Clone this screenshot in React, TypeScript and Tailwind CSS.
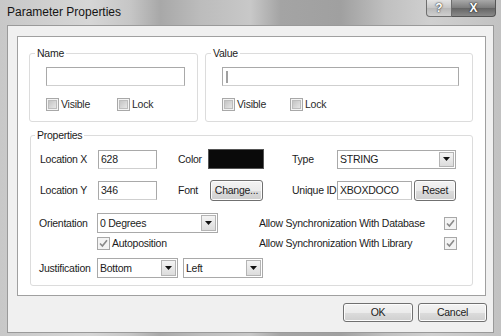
import React from "react";

const font = "font-['Liberation_Sans',Arial,sans-serif]";

function Checkbox({ checked = false }: { checked?: boolean }) {
  return (
    <div className="w-[13px] h-[13px] border border-[#a8a8a8] bg-[#f4f4f4] flex items-center justify-center shrink-0">
      {checked ? (
        <svg width="9" height="9" viewBox="0 0 9 9">
          <path d="M1 4.5 L3.4 7 L8 1.2" fill="none" stroke="#8a8a8a" strokeWidth="1.6" />
        </svg>
      ) : (
        <div className="w-[9px] h-[9px] border border-[#bdbdbd] bg-[linear-gradient(135deg,#c4c4c4,#e6e6e6)]" />
      )}
    </div>
  );
}

function TextBox({ w, value, children }: { w: string; value?: string; children?: React.ReactNode }) {
  return (
    <div className={`${w} h-[19px] border border-[#a9a9a9] border-b-[#cfcfcf] bg-white flex items-center pl-[2px] text-[#1c1c1c] shrink-0`}>
      {value}
      {children}
    </div>
  );
}

function Select({ w, h = "h-[19px]", value }: { w: string; h?: string; value: string }) {
  return (
    <div className={`${w} ${h} border border-[#a9a9a9] bg-white flex items-center shrink-0`}>
      <div className="flex-1 pl-[2px] text-[#1c1c1c]">{value}</div>
      <div className="w-[15px] self-stretch m-[1px] border border-[#b4b4b4] bg-[linear-gradient(#f4f4f4,#dcdcdc)] flex items-center justify-center">
        <svg width="7" height="4" viewBox="0 0 7 4">
          <path d="M0 0 H7 L3.5 4 Z" fill="#111" />
        </svg>
      </div>
    </div>
  );
}

function Button({ w, h, label }: { w: string; h: string; label: string }) {
  return (
    <div
      className={`${w} ${h} border border-[#707070] rounded-[3px] bg-[linear-gradient(#f3f3f3_0%,#ebebeb_50%,#dcdcdc_51%,#cfcfcf_100%)] shadow-[inset_0_0_0_1px_#fcfcfc] flex items-center justify-center text-[#1c1c1c] shrink-0`}
    >
      {label}
    </div>
  );
}

export default function App() {
  return (
    <div
      className={`${font} w-[501px] h-[336px] flex flex-col bg-[linear-gradient(90deg,#c8c8c8_0%,#d6d6d6_18%,#c6c6c6_26%,#a8a8a8_32%,#bcbcbc_40%,#c8c8c8_50%,#a4a4a4_56%,#a0a0a0_68%,#c0c0c0_77%,#d0d0d0_86%,#c2c2c2_100%)] overflow-hidden`}
    >
      {/* title bar */}
      <div className="h-[25px] flex items-start justify-between shrink-0">
        <div className="pl-[7px] pt-[5px] text-[12px] leading-[14px] text-[#141414]">Parameter Properties</div>
        <div className="flex mr-[5px]">
          <div className="w-[26px] h-[17px] border border-[#6e6e6e] border-t-0 rounded-bl-[4px] bg-[linear-gradient(#e4e4e4,#c6c6c6_50%,#b8b8b8_51%,#cfcfcf)] flex items-center justify-center text-[12px] font-bold text-white [text-shadow:0_0_2px_#333,0_0_1px_#333]">
            ?
          </div>
          <div className="w-[44px] h-[17px] border border-[#555] border-t-0 border-l-0 rounded-br-[4px] bg-[linear-gradient(#a8a8a8,#7c7c7c_50%,#646464_51%,#8a8a8a)] flex items-center justify-center text-[12px] font-bold text-white [text-shadow:0_0_2px_#222,0_0_1px_#222]">
            X
          </div>
        </div>
      </div>

      {/* client */}
      <div className="mx-[7px] h-[308px] border border-[#9a9a9a] bg-[#f0f0f0] flex flex-col text-[10.5px] leading-[13px] tracking-[-0.25px] text-[#1c1c1c]">
        {/* white panel */}
        <div className="ml-[9px] mt-[10px] w-[469px] h-[260px] border border-[#a0a0a0] bg-white flex flex-col">
          {/* top groups */}
          <div className="flex mt-[10px]">
            <fieldset className="ml-[11px] w-[169px] h-[75px] border border-[#dcdcdc] rounded-[3px] pl-[5px]">
              <legend className="px-[2px]">Name</legend>
              <div className="pl-[11px] pt-[7px]">
                <TextBox w="w-[139px]" />
                <div className="flex items-center mt-[12px]">
                  <Checkbox />
                  <span className="ml-[2px] w-[56px] text-[#2a2a2a]">Visible</span>
                  <Checkbox />
                  <span className="ml-[2px] text-[#2a2a2a]">Lock</span>
                </div>
              </div>
            </fieldset>
            <fieldset className="ml-[7px] w-[268px] h-[75px] border border-[#dcdcdc] rounded-[3px] pl-[5px]">
              <legend className="px-[2px]">Value</legend>
              <div className="pl-[11px] pt-[7px]">
                <TextBox w="w-[237px]">
                  <div className="ml-[1px] w-[2px] h-[12px] bg-[#a0a0a0]" />
                </TextBox>
                <div className="flex items-center mt-[12px]">
                  <Checkbox />
                  <span className="ml-[2px] w-[53px] text-[#2a2a2a]">Visible</span>
                  <Checkbox />
                  <span className="ml-[2px] text-[#2a2a2a]">Lock</span>
                </div>
              </div>
            </fieldset>
          </div>

          {/* properties */}
          <fieldset className="ml-[12px] mt-[7px] w-[443px] h-[157px] border border-[#dcdcdc] rounded-[3px] pl-[4px]">
            <legend className="px-[2px]">Properties</legend>
            <div className="flex flex-col pt-[7px]">
              {/* row 1 */}
              <div className="flex items-center h-[20px]">
                <span className="ml-[5px] w-[58px]">Location X</span>
                <TextBox w="w-[59px]" value="628" />
                <span className="ml-[21px] w-[30px]">Color</span>
                <div className="w-[56px] h-[20px] bg-[#0a0a0a] border border-[#555] shrink-0" />
                <span className="ml-[28px] w-[45px]">Type</span>
                <Select w="w-[119px]" value="STRING" />
              </div>
              {/* row 2 */}
              <div className="flex items-center h-[21px] mt-[11px]">
                <span className="ml-[5px] w-[58px]">Location Y</span>
                <TextBox w="w-[59px]" value="346" />
                <span className="ml-[21px] w-[32px]">Font</span>
                <Button w="w-[53px]" h="h-[21px]" label="Change..." />
                <span className="ml-[29px] w-[45px]">Unique ID</span>
                <TextBox w="w-[75px]" value="XBOXDOCO" />
                <div className="ml-[2px]">
                  <Button w="w-[42px]" h="h-[21px]" label="Reset" />
                </div>
              </div>
              {/* row 3 */}
              <div className="flex items-center h-[20px] mt-[12px]">
                <span className="ml-[4px] w-[58px]">Orientation</span>
                <Select w="w-[121px]" h="h-[20px]" value="0 Degrees" />
                <span className="ml-[41px] w-[185px]">Allow Synchronization With Database</span>
                <Checkbox checked />
              </div>
              {/* row 4 */}
              <div className="flex items-center h-[13px] mt-[4px]">
                <div className="ml-[62px]">
                  <Checkbox checked />
                </div>
                <span className="ml-[2px] w-[147px]">Autoposition</span>
                <span className="w-[185px]">Allow Synchronization With Library</span>
                <Checkbox checked />
              </div>
              {/* row 5 */}
              <div className="flex items-center h-[20px] mt-[8px]">
                <span className="ml-[4px] w-[58px]">Justification</span>
                <Select w="w-[81px]" h="h-[20px]" value="Bottom" />
                <div className="ml-[5px]">
                  <Select w="w-[80px]" h="h-[20px]" value="Left" />
                </div>
              </div>
            </div>
          </fieldset>
        </div>

        {/* buttons */}
        <div className="flex justify-end gap-[5px] mt-[7px] pr-[6px]">
          <Button w="w-[70px]" h="h-[19px]" label="OK" />
          <Button w="w-[69px]" h="h-[19px]" label="Cancel" />
        </div>
      </div>
    </div>
  );
}
